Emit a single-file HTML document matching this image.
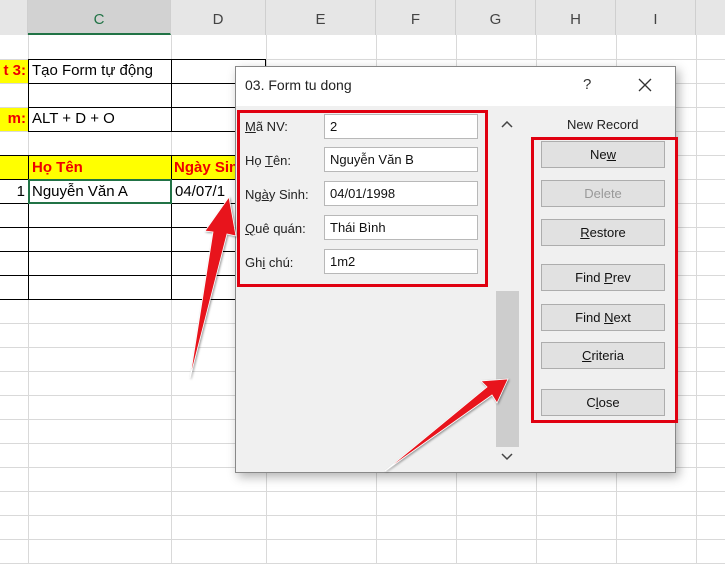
<!DOCTYPE html>
<html><head><meta charset="utf-8"><style>
*{margin:0;padding:0;box-sizing:border-box}
body{width:725px;height:564px;overflow:hidden;background:#fff;font-family:"Liberation Sans","Noto Sans CJK SC",sans-serif;position:relative}
.a{position:absolute}
.vl{position:absolute;top:35px;bottom:0;width:1px;background:#d9d9d9}
.hl{position:absolute;left:0;right:0;height:1px;background:#d9d9d9}
.hd{position:absolute;top:0;height:35px;background:#e6e6e6;font-size:15px;color:#444;text-align:center;line-height:40px;border-right:1px solid #cfcfcf}
.ct{position:absolute;font-size:15px;color:#000;white-space:nowrap}
.bk{position:absolute;background:#000}
.lab{position:absolute;left:245px;font-size:13px;color:#222}
.inp{position:absolute;left:324px;width:154px;height:25px;background:#fff;border:1px solid #b8b8b8;font-size:13px;padding-left:5px;line-height:23px;color:#111}
.btn{position:absolute;left:541px;width:124px;height:27px;background:#e1e1e1;border:1px solid #adadad;font-size:13px;text-align:center;line-height:25px;color:#111}
u{text-decoration:underline}
</style></head><body>
<!-- header -->
<div class="hd" style="left:0;width:28px"></div>
<div class="hd" style="left:28px;width:143px;background:#d2d2d2;color:#217346;border-bottom:2px solid #217346">C</div>
<div class="hd" style="left:171px;width:95px">D</div>
<div class="hd" style="left:266px;width:110px">E</div>
<div class="hd" style="left:376px;width:80px">F</div>
<div class="hd" style="left:456px;width:80px">G</div>
<div class="hd" style="left:536px;width:80px">H</div>
<div class="hd" style="left:616px;width:80px">I</div>
<div class="hd" style="left:696px;width:40px"></div>
<!-- grid -->
<div class="vl" style="left:28px"></div><div class="vl" style="left:171px"></div><div class="vl" style="left:266px"></div><div class="vl" style="left:376px"></div><div class="vl" style="left:456px"></div><div class="vl" style="left:536px"></div><div class="vl" style="left:616px"></div><div class="vl" style="left:696px"></div>
<div class="hl" style="top:59px"></div><div class="hl" style="top:83px"></div><div class="hl" style="top:107px"></div><div class="hl" style="top:131px"></div><div class="hl" style="top:155px"></div><div class="hl" style="top:179px"></div><div class="hl" style="top:203px"></div><div class="hl" style="top:227px"></div><div class="hl" style="top:251px"></div><div class="hl" style="top:275px"></div><div class="hl" style="top:299px"></div><div class="hl" style="top:323px"></div><div class="hl" style="top:347px"></div><div class="hl" style="top:371px"></div><div class="hl" style="top:395px"></div><div class="hl" style="top:419px"></div><div class="hl" style="top:443px"></div><div class="hl" style="top:467px"></div><div class="hl" style="top:491px"></div><div class="hl" style="top:515px"></div><div class="hl" style="top:539px"></div><div class="hl" style="top:563px"></div>
<!-- cells -->
<div class="a" style="left:0;top:60px;width:28px;height:23px;background:#ffff00"></div>
<div class="ct" style="left:0;top:62px;width:26px;text-align:right;color:#e00;font-weight:bold">t 3:</div>
<div class="ct" style="left:32px;top:62px">Tạo Form tự động</div>
<div class="a" style="left:0;top:108px;width:28px;height:23px;background:#ffff00"></div>
<div class="ct" style="left:0;top:110px;width:26px;text-align:right;color:#e00;font-weight:bold">m:</div>
<div class="ct" style="left:32px;top:110px">ALT + D + O</div>
<div class="a" style="left:0;top:156px;width:266px;height:23px;background:#ffff00"></div>
<div class="ct" style="left:32px;top:159px;color:#e00;font-weight:bold">Họ Tên</div>
<div class="ct" style="left:174px;top:159px;color:#e00;font-weight:bold">Ngày Sin</div>
<div class="ct" style="left:0;top:183px;width:25px;text-align:right">1</div>
<div class="ct" style="left:32px;top:183px">Nguyễn Văn A</div>
<div class="ct" style="left:175px;top:183px">04/07/1</div>
<!-- black borders -->
<div class="bk" style="left:28px;top:59px;width:238px;height:1px"></div>
<div class="bk" style="left:28px;top:83px;width:238px;height:1px"></div>
<div class="bk" style="left:28px;top:107px;width:238px;height:1px"></div>
<div class="bk" style="left:28px;top:131px;width:238px;height:1px"></div>
<div class="bk" style="left:0;top:155px;width:266px;height:1px"></div>
<div class="bk" style="left:0;top:179px;width:266px;height:1px"></div>
<div class="bk" style="left:0;top:203px;width:266px;height:1px"></div>
<div class="bk" style="left:0;top:227px;width:266px;height:1px"></div>
<div class="bk" style="left:0;top:251px;width:266px;height:1px"></div>
<div class="bk" style="left:0;top:275px;width:266px;height:1px"></div>
<div class="bk" style="left:0;top:299px;width:266px;height:1px"></div>
<div class="bk" style="left:28px;top:59px;width:1px;height:72px"></div>
<div class="bk" style="left:28px;top:155px;width:1px;height:144px"></div>
<div class="bk" style="left:171px;top:59px;width:1px;height:72px"></div>
<div class="bk" style="left:171px;top:155px;width:1px;height:144px"></div>
<div class="bk" style="left:265px;top:59px;width:1px;height:240px"></div>
<div class="a" style="left:28px;top:179px;width:144px;height:25px;border:2px solid #217346"></div>
<!-- dialog -->
<div class="a" style="left:235px;top:66px;width:441px;height:407px;background:#f0f0f0;border:1px solid #888;box-shadow:3px 4px 10px rgba(0,0,0,.3)">
 <div class="a" style="left:0;top:0;width:439px;height:39px;background:#fff"></div>
</div>
<div class="a" style="left:245px;top:77px;font-size:14px;color:#222">03. Form tu dong</div>
<div class="a" style="left:583px;top:76px;font-size:15px;color:#333">?</div>
<svg class="a" style="left:638px;top:78px" width="14" height="14"><path d="M1 1L13 13M13 1L1 13" stroke="#333" stroke-width="1.3"/></svg>
<div class="a" style="left:237px;top:110px;width:251px;height:177px;border:3px solid #e00010"></div>
<div class="lab" style="top:119px"><u>M</u>ã NV:</div>
<div class="lab" style="top:153px">Họ <u>T</u>ên:</div>
<div class="lab" style="top:187px">Ng<u>à</u>y Sinh:</div>
<div class="lab" style="top:221px"><u>Q</u>uê quán:</div>
<div class="lab" style="top:255px">Gh<u>i</u> chú:</div>
<div class="inp" style="top:114px">2</div>
<div class="inp" style="top:147px">Nguyễn Văn B</div>
<div class="inp" style="top:181px">04/01/1998</div>
<div class="inp" style="top:215px">Thái Bình</div>
<div class="inp" style="top:249px">1m2</div>
<svg class="a" style="left:501px;top:121px" width="12" height="8"><path d="M1 6L6 1L11 6" stroke="#444" stroke-width="1.5" fill="none"/></svg>
<div class="a" style="left:496px;top:291px;width:23px;height:156px;background:#cdcdcd"></div>
<svg class="a" style="left:501px;top:453px" width="12" height="8"><path d="M1 1L6 6L11 1" stroke="#444" stroke-width="1.5" fill="none"/></svg>
<div class="a" style="left:567px;top:117px;font-size:13px;color:#222">New Record</div>
<div class="a" style="left:531px;top:137px;width:147px;height:286px;border:3px solid #e00010"></div>
<div class="btn" style="top:141px">Ne<u>w</u></div>
<div class="btn" style="top:180px;color:#999">Delete</div>
<div class="btn" style="top:219px"><u>R</u>estore</div>
<div class="btn" style="top:264px">Find <u>P</u>rev</div>
<div class="btn" style="top:304px">Find <u>N</u>ext</div>
<div class="btn" style="top:342px"><u>C</u>riteria</div>
<div class="btn" style="top:389px">C<u>l</u>ose</div>
<!-- arrows -->
<svg class="a" style="left:0;top:0" width="725" height="564">
<g fill="#e8141c" stroke="#fff" stroke-width="0.8" style="filter:drop-shadow(1px 1px 1px rgba(0,0,0,.4))">
<polygon points="190,378 213,232 205,231 229,197 236,236 227,234"/>
<polygon points="385,471 487,387 481,381 508,379 497,403 492,395"/>
</g>
</svg>
</body></html>
